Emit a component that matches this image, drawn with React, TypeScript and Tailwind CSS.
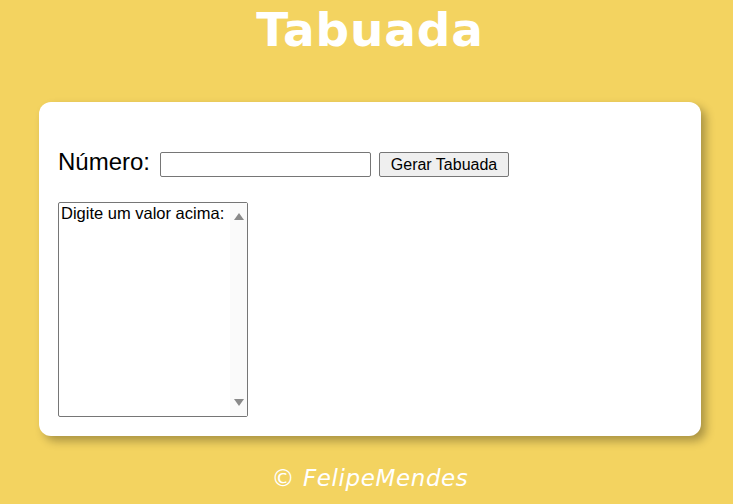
export default function App() {
  return (
    <div className="min-h-[504px] w-full bg-[#f3d360] flex flex-col items-center pl-[7px]">
      <h1 className="mt-[6px] text-[47px] leading-none font-bold text-white tracking-[0.8px] [font-family:'DejaVu_Sans',sans-serif]">
        Tabuada
      </h1>

      <div className="mt-[49px] w-[662px] h-[334px] bg-white rounded-[12px] shadow-[5px_5px_10px_rgba(0,0,0,0.3)] pt-[46px] pl-[19px] [font-family:'Liberation_Sans',Arial,sans-serif]">
        <div className="flex items-start">
          <span className="text-[24px] leading-[28px] text-black">Número:</span>
          <input
            type="text"
            className="ml-[10px] mt-[4px] w-[211px] h-[25px] border border-[#767676] rounded-[2px] bg-white outline-none"
          />
          <button className="ml-[8px] mt-[4px] h-[25px] w-[130px] border border-[#767676] rounded-[2px] bg-[#efefef] text-[16px] text-black leading-none">
            Gerar Tabuada
          </button>
        </div>

        <div className="mt-[25px] w-[190px] h-[215px] border border-[#767676] rounded-[2px] flex">
          <div className="flex-1 pl-[2px] pt-[1px] text-[16.5px] leading-[18px] text-black whitespace-nowrap overflow-hidden">
            Digite um valor acima:
          </div>
          <div className="w-[17px] bg-[#fafafa] flex flex-col justify-between items-center py-[10px]">
            <svg width="10" height="7" viewBox="0 0 10 7">
              <path d="M0 7 L5 0 L10 7 Z" fill="#8a8a8a" />
            </svg>
            <svg width="10" height="7" viewBox="0 0 10 7">
              <path d="M0 0 L10 0 L5 7 Z" fill="#8a8a8a" />
            </svg>
          </div>
        </div>
      </div>

      <p className="mt-[25px] text-[23px] italic text-white tracking-[0.6px] [font-family:'DejaVu_Sans',sans-serif]">
        © FelipeMendes
      </p>
    </div>
  );
}
